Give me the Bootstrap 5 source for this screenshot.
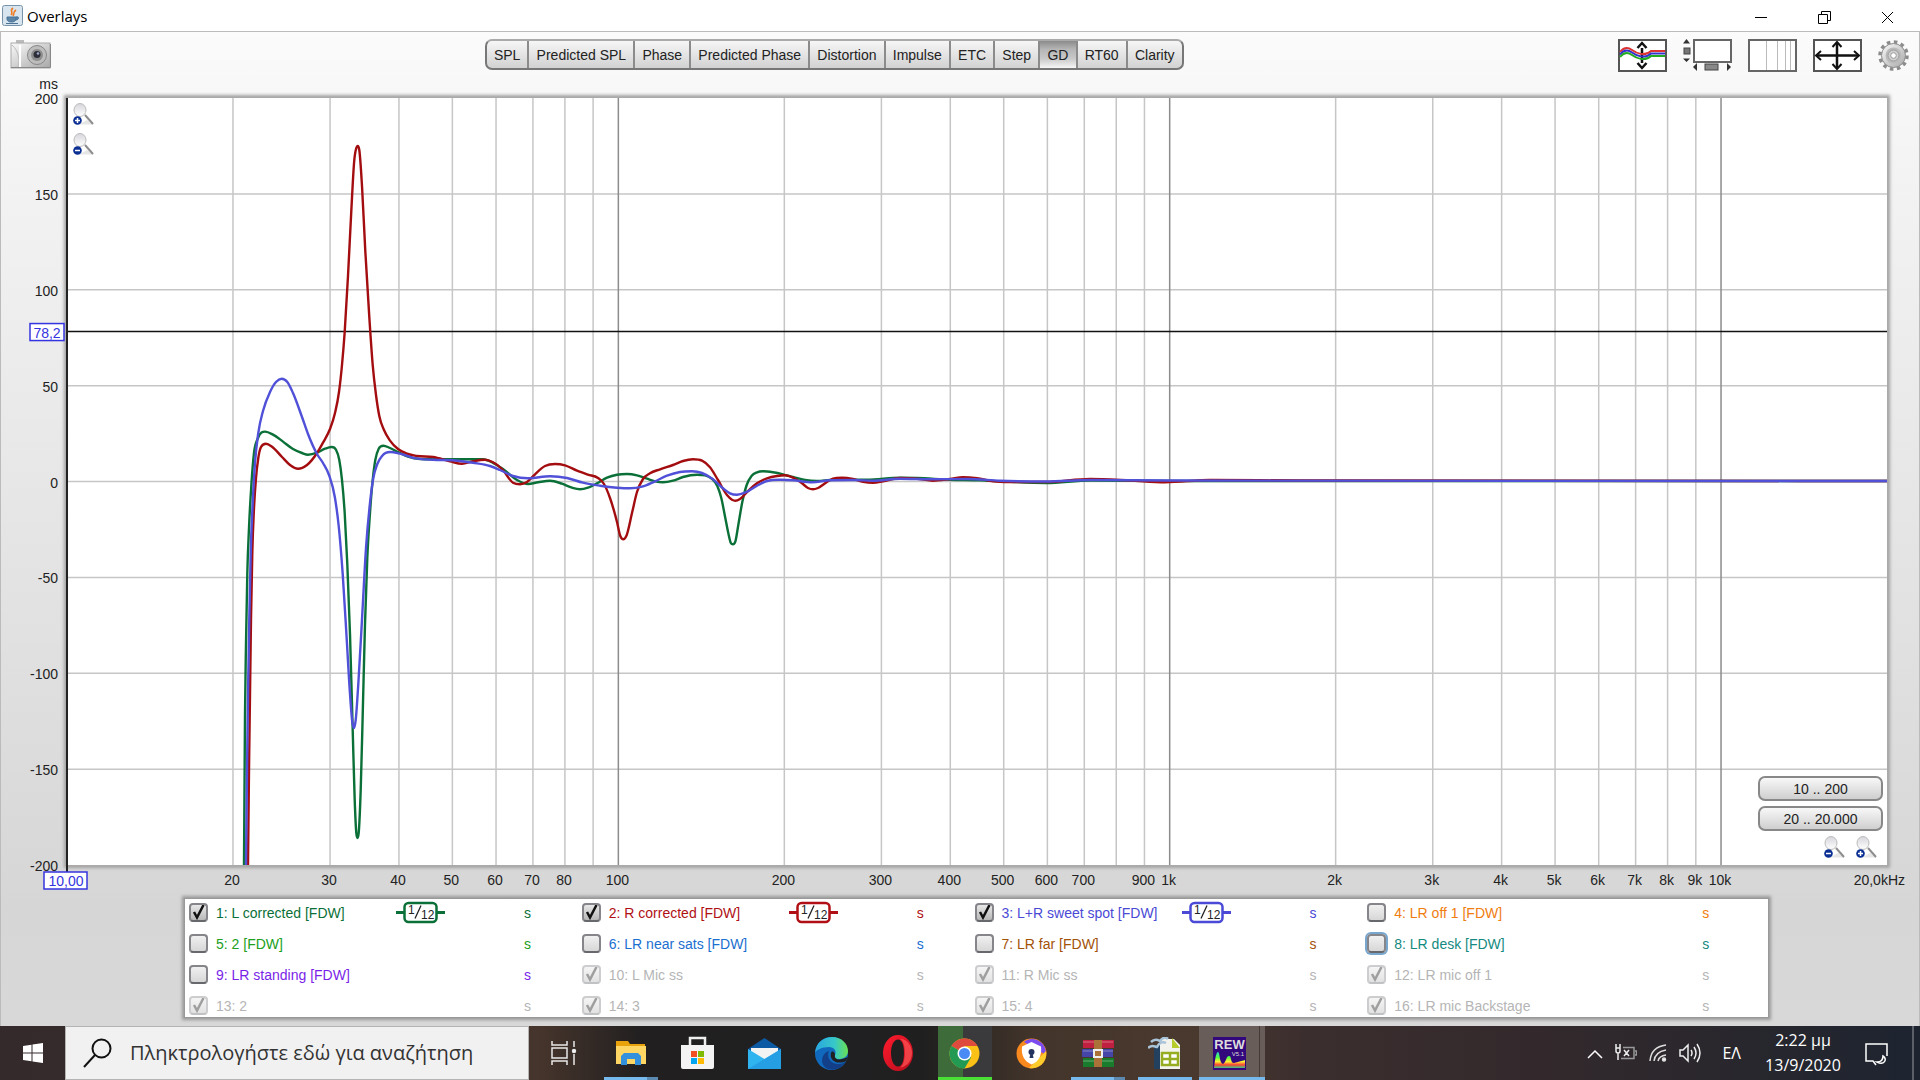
<!DOCTYPE html>
<html lang="el">
<head>
<meta charset="utf-8">
<meta name="viewport" content="width=device-width, initial-scale=1">
<title>Overlays</title>
<link href="https://cdn.jsdelivr.net/npm/bootstrap@5.3.0/dist/css/bootstrap.min.css" rel="stylesheet">
<style>
body{font:14px/16px "Liberation Sans",Arial,sans-serif;color:#222;background:#fff}
.ui-font{font-family:"Open Sans","Noto Sans",sans-serif}
.titlebar{height:31px;background:#fff;color:#000;font-size:15px;padding:0 1px 0 2px}
.winbtn{width:63px;height:31px;border:0;background:none;padding:0;color:#000}
.workspace{border:1px solid #bbb;border-bottom:0;background:linear-gradient(#fbfbfb,#f4f4f4 12%,#d6d6d6 88%,#d8d8d8)}
.tools{height:66px;padding:7px 10px 0 9px}
.iconbtn{border:0;background:none;padding:0;display:block;line-height:0}
.tabs{width:699px;height:31px;border:2px solid #777;border-top-color:#aaa;border-radius:7px;overflow:hidden;background:linear-gradient(#f6f6f6,#d2d2d2)}
.tabs button{flex:1 1 auto;border:0;border-right:2px solid #8b8b8b;background:none;padding:0 6px;color:#222;white-space:nowrap}
.tabs button:last-child{border-right:0}
.tabs button.chosen{background:linear-gradient(#8b8b8b,#b5b5b5 30%,#c8c8c8 65%,#f6f6f6)}
.chartrow{padding:0 32px 0 66px}
.plot{background:#fff;box-shadow:0 0 0 1px #aaa,0 0 3px 3px #a2a2a2;min-height:300px}
.plot svg.canvas{flex:1 1 0;overflow:visible;min-width:0}
.canvas text{font-size:14px;fill:#222}
.canvas .cursorlabel{fill:#3434e0}
.grid line{stroke:#c6c6c6;stroke-width:1.5}
.grid line.decade{stroke:#8c8c8c}
.curves path{fill:none;stroke-width:2.4;stroke-linejoin:round;vector-effect:non-scaling-stroke}
.zoomy{position:absolute;left:6px;top:5px;display:flex;flex-direction:column;gap:8px}
.ranges{position:absolute;right:4px;bottom:7px;width:125px}
.ranges .rangebtn{height:25px;margin-bottom:5px;border:2px solid #888;border-radius:7px;background:linear-gradient(#f8f8f8,#cfcfcf);color:#222;padding:0;display:block;width:100%}
.ranges .zooms{padding-right:6px;gap:11px}
.legendbox{margin:34px 151px 9px 184px;height:118px;background:#fff;box-shadow:0 0 0 1px #999,0 0 3px 3px #9a9a9a;padding:1px 8px 0 4px}
.tracegrid{row-gap:6px}
.trace{height:25px;display:grid;grid-template-columns:207px 128px 1fr;align-items:center}
.trace label{display:flex;align-items:center;gap:8px;white-space:nowrap}
.tick{appearance:none;width:19px;height:19px;margin:0;border:2px solid #85858a;border-bottom-color:#66686c;border-radius:4px;background:linear-gradient(#f0f0f0,#d7d7d7) center/100% 100%}
.tick:checked{background:url("data:image/svg+xml,%3Csvg xmlns='http://www.w3.org/2000/svg' viewBox='0 0 15 15'%3E%3Cpath d='M3 7 6 12.500 12.500 0' fill='none' stroke='%23111' stroke-width='2.500'/%3E%3C/svg%3E") center/100% 100%,linear-gradient(#e8e8e8,#b8b8b8)}
.tick:disabled{opacity:.4}
.tick.focused{box-shadow:0 0 0 2px #77a6cf}
.muted{color:#b5b5b5}
.taskbar{height:54px;color:#fff;background:linear-gradient(90deg,#352a2b 0,#392d2c 20%,#46352c 28%,#211f20 33.500%,#202022 45%,#1f1f1f 48%,#43352b 54%,#4a392e 62%,#3b2e2e 68%,#33292c 80%,#29272d 90%,#1d2430)}
.taskbar button{border:0;background:none;padding:0;color:#fff}
.start{width:65px}
.searchbox{width:464px;background:#f1f1f1;border:1px solid #b4b4b4;padding-left:17px;gap:18px}
.searchbox input{border:0;background:none;outline:0;font-size:20px;line-height:28px;flex:1;min-width:0;color:#333;padding:0}
.searchbox input::placeholder{color:#333;opacity:1}
.apps{width:734px;margin-left:2px}
.apps .slot{flex:1 1 0;display:flex;justify-content:center;align-items:stretch}
.apps .slot button{width:54px;display:flex;align-items:center;justify-content:center}
.apps .running{box-shadow:inset 0 -3px #76b9ed}
.apps .split{background:linear-gradient(#5b89b0,#5b89b0) right bottom/11px 3px no-repeat,linear-gradient(#76b9ed,#76b9ed) bottom/100% 3px no-repeat}
.apps .busy{box-shadow:inset 0 -3px #4be036;background:linear-gradient(90deg,#3d6b39 25px,#3a3a3c 25px)}
.apps .slot .current{width:66px;padding-right:4px;background:linear-gradient(90deg,transparent 60px,#463a36 60px,#463a36 61px,transparent 61px),#685d59;box-shadow:inset 0 -3px #76b9ed}
.tray{padding-right:2px;font-size:16px;line-height:25px}
.status{gap:12px}
.lang{padding:0 16px 0 20px}
.clock{width:92px;text-align:center}
.desk{width:6px;height:54px;border-left:2px solid #5b5f68 !important}
</style>
</head>
<body class="d-flex flex-column min-vh-100">

<svg width="0" height="0" class="position-absolute" aria-hidden="true">
  <defs>
    <linearGradient id="lens" x1="0" y1="0" x2="0" y2="1"><stop offset="0" stop-color="#d6d6dc"/><stop offset="1" stop-color="#fff"/></linearGradient>
    <linearGradient id="metal" x1="0" y1="0" x2="1" y2="1"><stop offset="0" stop-color="#fafafa"/><stop offset="1" stop-color="#a8a8a8"/></linearGradient>
    <linearGradient id="edge1" x1="0" y1="0" x2="1" y2="0"><stop offset="0" stop-color="#2aa6e0"/><stop offset=".6" stop-color="#37c8c8"/><stop offset="1" stop-color="#69e052"/></linearGradient>
    <linearGradient id="opera" x1="0" y1="0" x2="1" y2="1"><stop offset="0" stop-color="#ff1b2d"/><stop offset="1" stop-color="#b70d1c"/></linearGradient>
    <linearGradient id="rainbow" x1="0" y1="0" x2="0" y2="1"><stop offset="0" stop-color="#2ad0c8"/><stop offset=".35" stop-color="#5f4"/><stop offset=".6" stop-color="#fe3"/><stop offset=".8" stop-color="#f43"/><stop offset="1" stop-color="#3c8"/></linearGradient>
    <symbol id="glass" viewBox="0 0 21 22">
      <path d="M6 21.500h14.500L14 17z" fill="#e6e6e6"/><path d="M12 12 20 21" stroke="#8d8d8d" stroke-width="2"/>
      <ellipse cx="7" cy="7" rx="6" ry="6.500" fill="url(#lens)" stroke="#bbb"/>
      <circle cx="4.500" cy="17.500" r="4.300" fill="#0b2f93"/>
    </symbol>
    <symbol id="filter" viewBox="0 0 49 23">
      <path d="M0 11.500h9m31 0h9" stroke="currentColor" stroke-width="3"/>
      <rect x="8.500" y="2" width="32" height="19" rx="4" fill="#fff" stroke="currentColor" stroke-width="2.500"/>
      <path d="M19 17.500 25 4.500" stroke="#222" stroke-width="1.300"/>
    </symbol>
  </defs>
</svg>

<header class="titlebar ui-font d-flex align-items-center">
  <svg width="21" height="21" viewBox="0 0 21 21" aria-hidden="true"><rect x=".5" y=".5" width="20" height="20" rx="2" fill="#d8e4ee" stroke="#7894ab"/><path d="M11 3c-4 3 1 4-2 7m5-5c-4 3-1 3-3 6" fill="none" stroke="#ee7b21" stroke-width="1.600"/><path d="M5 12h9v2c0 2-2 3-4.500 3S5 16 5 14zm9 0c4-1 3 3-.5 3M4 18.500h12" fill="#5b84a6" stroke="#4b7396"/></svg>
  <span class="ms-1">Overlays</span>
  <div class="ms-auto d-flex">
    <button class="winbtn" aria-label="Minimize"><svg width="13" height="13"><path d="M0 6.500h12" stroke="#000"/></svg></button>
    <button class="winbtn" aria-label="Restore"><svg width="13" height="13" fill="none" stroke="#000"><path d="M.5 3.500h9v9h-9zM3.500 3V.5h9v9H10"/></svg></button>
    <button class="winbtn" aria-label="Close"><svg width="13" height="13" stroke="#000"><path d="m1 1 11 11M12 1 1 12"/></svg></button>
  </div>
</header>

<main class="workspace flex-grow-1 d-flex flex-column">
  <div class="tools d-flex align-items-start">
    <div class="w-25">
      <button class="iconbtn" aria-label="Capture image"><svg width="42" height="30" viewBox="0 0 42 30"><rect x="6" y="1" width="8" height="4" fill="#bbb"/><rect x="1" y="4" width="39" height="25" fill="url(#metal)" stroke="#aaa"/><path d="M1 28.500h39.500V5" fill="none" stroke="#888"/><path d="M2 6c7 6 8 16 6 22" fill="none" stroke="#bbb"/><path d="M10 6v22" stroke="#fff" stroke-width="2"/><circle cx="27" cy="16" r="9.500" fill="#bdbdbd" stroke="#888"/><circle cx="27" cy="16" r="6" fill="#8d8d8d"/><circle cx="27" cy="15.500" r="3.500" fill="#2d2d38"/><circle cx="28" cy="14.500" r="1.300" fill="#a0a8c8"/></svg></button>
    </div>
    <nav class="tabs d-flex" aria-label="Graph type">
      <button>SPL</button><button>Predicted SPL</button><button>Phase</button><button>Predicted Phase</button><button>Distortion</button><button>Impulse</button><button>ETC</button><button>Step</button><button class="chosen" aria-pressed="true">GD</button><button>RT60</button><button>Clarity</button>
    </nav>
    <div class="ms-auto d-flex gap-3">
      <button class="iconbtn" aria-label="Separate traces"><svg width="49" height="33" viewBox="0 0 49 33"><rect x="1" y="1" width="47" height="31" fill="#fff" stroke="#555" stroke-width="2"/><path d="M24 9v15M19.500 9 24 4l4.500 5m-9 15 4.500 5 4.500-5" fill="none" stroke="#111" stroke-width="2.500"/><g fill="none" stroke-width="2"><path d="M2 13c4-5 8-5 12-2s13 7 19 1h14" stroke="#d33"/><path d="M2 15.500c4-5 8-5 12-2s13 7 19 1h14" stroke="#33c"/><path d="M2 18c4-5 8-5 12-2s13 7 19 1h14" stroke="#2a2"/></g></svg></button>
      <button class="iconbtn" aria-label="Scrollbars"><svg width="49" height="33" viewBox="0 0 49 33"><rect x="11" y="1" width="37" height="22" fill="#fff" stroke="#666" stroke-width="2"/><path d="M0 4.500 3.500 0 7 4.500zM0 19.500h7L3.500 23zM14 24v8l-4-4zM44 24v8l4-4z" fill="#333"/><rect x="1" y="9" width="6" height="6" fill="#777" stroke="#444"/><rect x="22" y="25" width="13" height="6" fill="#888" stroke="#444"/></svg></button>
      <button class="iconbtn" aria-label="Frequency axis"><svg width="49" height="33" viewBox="0 0 49 33"><rect x="1" y="1" width="47" height="31" fill="#fff" stroke="#666" stroke-width="2"/><path d="M18.500 2v29m11-29v29m8-29v29m5-29v29" stroke="#bbb"/></svg></button>
      <button class="iconbtn" aria-label="Graph limits"><svg width="49" height="33" viewBox="0 0 49 33"><rect x="1" y="1" width="47" height="31" fill="#fff" stroke="#555" stroke-width="2"/><path d="M4 16.500h41M24 4v25" stroke="#111" stroke-width="2.500"/><path d="m8 12-5 4.500L8 21m33-9 5 4.500-5 4.500M19.500 8 24 3l4.500 5m-9 17 4.500 5 4.500-5" fill="none" stroke="#111" stroke-width="2"/></svg></button>
      <button class="iconbtn" aria-label="Graph controls"><svg width="31" height="33" viewBox="-15.500 -16.500 31 33"><circle r="13.500" fill="none" stroke="#8c8c8c" stroke-width="3.500" stroke-dasharray="3.530 3.530"/><circle r="12" fill="url(#metal)" stroke="#8c8c8c"/><circle r="8" fill="#bbb"/><circle r="5.500" fill="#d0d0d0" stroke="#9b9b9b"/><circle r="2.800" fill="#fff" stroke="#999"/></svg></button>
    </div>
  </div>

  <div class="chartrow flex-grow-1 d-flex">
    <div class="plot flex-grow-1 d-flex position-relative">
      <svg class="canvas" role="img" aria-label="Group delay graph">
        <g class="grid" id="grid"></g>
        <line x1="0" x2="100%" y1="30.450%" y2="30.450%" stroke="#111" stroke-width="1.500"/>
        <svg class="curves" id="curves" x="0" y="0" width="100%" height="100%" viewBox="67 98 1820 767" preserveAspectRatio="none"></svg>
        <path d="M0 0v774" stroke="#222" stroke-width="2"/>
        <g id="ticks"></g>
        <text x="-9" y="-9" text-anchor="end">ms</text>
        <svg x="0" y="30.450%" overflow="visible"><rect x="-37" y="-8" width="34" height="17" fill="#fff" stroke="#3434e0" stroke-width="1.500"/><text class="cursorlabel" x="-20" y="6" text-anchor="middle">78,2</text></svg>
        <svg x="0" y="100%" overflow="visible"><rect x="-23" y="7" width="43" height="17" fill="#fff" stroke="#3434e0" stroke-width="1.500"/><text class="cursorlabel" x="-1" y="21" text-anchor="middle">10,00</text></svg>
      </svg>
      <div class="zoomy">
        <button class="iconbtn" aria-label="Zoom in vertically"><svg width="21" height="22" viewBox="0 0 21 22"><use href="#glass"/><path d="M2 17.500h5m-2.500-2.500v5" stroke="#fff" stroke-width="1.500"/></svg></button>
        <button class="iconbtn" aria-label="Zoom out vertically"><svg width="21" height="22" viewBox="0 0 21 22"><use href="#glass"/><path d="M2 17.500h5" stroke="#fff" stroke-width="1.500"/></svg></button>
      </div>
      <div class="ranges">
        <button class="rangebtn">10 .. 200</button>
        <button class="rangebtn">20 .. 20.000</button>
        <div class="zooms d-flex justify-content-end">
          <button class="iconbtn" aria-label="Zoom out"><svg width="21" height="22" viewBox="0 0 21 22"><use href="#glass"/><path d="M2 17.500h5" stroke="#fff" stroke-width="1.500"/></svg></button>
          <button class="iconbtn" aria-label="Zoom in"><svg width="21" height="22" viewBox="0 0 21 22"><use href="#glass"/><path d="M2 17.500h5m-2.500-2.500v5" stroke="#fff" stroke-width="1.500"/></svg></button>
        </div>
      </div>
    </div>
  </div>

  <section class="legendbox" aria-label="Traces"><div class="row g-0 tracegrid" id="traces"></div></section>
</main>

<footer class="taskbar ui-font d-flex align-items-stretch">
  <button class="start" aria-label="Start"><svg width="20" height="20" viewBox="0 0 20 20" fill="#fff"><path d="M0 3l8.500-1.300v7.800H0zM9.500 1.500 20 0v9.500H9.500zM0 10.500h8.500v7.800L0 17zM9.500 10.500H20V20L9.500 18.500z"/></svg></button>
  <label class="searchbox d-flex align-items-center"><svg width="29" height="30" viewBox="0 0 29 30" fill="none" stroke="#111" stroke-width="2"><circle cx="18.500" cy="10.500" r="9"/><path d="M12 17 1 29"/></svg><input type="search" aria-label="Αναζήτηση" placeholder="Πληκτρολογήστε εδώ για αναζήτηση"></label>
  <div class="apps d-flex">
    <div class="slot"><button aria-label="Task view"><svg width="26" height="24" viewBox="0 0 26 24" fill="none" stroke="#e8e8e8" stroke-width="1.500"><path d="M1 0v4h15V0M1 24v-4h15v4M1 7h15v10H1zM23 0v6m0 7v11"/><circle cx="23" cy="10" r="1.500" fill="#fff"/></svg></button></div>
    <div class="slot"><button class="split" aria-label="File Explorer"><svg width="30" height="24" viewBox="0 0 30 24"><path d="M0 0h12l2 3h15v20H0z" fill="#e8a30c"/><path d="M0 5h30v18H0z" fill="#fdd663"/><path d="M5 24v-9l3-3h14l3 3v9h-6v-6h-8v6z" fill="#3390dc"/></svg></button></div>
    <div class="slot"><button aria-label="Store"><svg width="33" height="34" viewBox="0 0 33 34"><path d="M9 10V2h15v8" fill="none" stroke="#eee" stroke-width="2.500"/><path d="M0 9h33v22q0 2-2 2H2q-2 0-2-2z" fill="#f3f3f3"/><path d="M10 15h6v6h-6z" fill="#f25022"/><path d="M17 15h6v6h-6z" fill="#7fba00"/><path d="M10 22h6v6h-6z" fill="#00a4ef"/><path d="M17 22h6v6h-6z" fill="#ffb900"/></svg></button></div>
    <div class="slot"><button aria-label="Mail"><svg width="33" height="31" viewBox="0 0 33 31"><path d="M0 11 16.500 0 33 11v20H0z" fill="#0c59a4"/><path d="M3 10h27v14H3z" fill="#f3f3f3"/><path d="m0 11 16.500 10L33 11v20H0z" fill="#2fb4f0"/><path d="m33 11-16.500 10L0 31h33z" fill="#1f8fdc" opacity=".6"/></svg></button></div>
    <div class="slot"><button aria-label="Edge"><svg width="33" height="33" viewBox="0 0 33 33"><circle cx="16.500" cy="16.500" r="16.500" fill="#1069bd"/><path d="M0 16C1 5 9 0 17 0c10 0 16 7 16 14 0 6-5 8-9 8-4 0-5-2-4-4 2-4-1-8-6-8C7 10 1 13 0 16z" fill="url(#edge1)"/><path d="M14 14c-3 6 2 14 10 13 3 0 5-1 7-3-6 12-23 11-24 0 0-5 3-9 7-10z" fill="#123f87"/><path d="M20 18c-1 5 5 6 13 2l-2 4c-8 4-17 0-15-8 1-3 4-1 4 2z" fill="#202022"/></svg></button></div>
    <div class="slot"><button aria-label="Opera"><svg width="30" height="36" viewBox="0 0 30 32" preserveAspectRatio="none"><path fill-rule="evenodd" d="M15 0a15 16 0 1 0 0 32 15 16 0 0 0 0-32zm0 4c4 0 6 5 6 12s-2 12-6 12-7-5-7-12 3-12 7-12z" fill="url(#opera)"/><path d="M17 3c16 2 16 24 0 26 6-3 7-22 0-26z" fill="#ff5557" opacity=".7"/></svg></button></div>
    <div class="slot"><button class="busy" aria-label="Chrome"><svg width="31" height="31" viewBox="-15.500 -15.500 31 31"><circle r="15" fill="#fbc116"/><path d="M0 0-13-7.500A15 15 0 0 1 13-7.500H0z" fill="#de4a3d"/><path d="m0 0-13-7.500A15 15 0 0 0 0 15L6.500 4z" fill="#229a54"/><circle r="7" fill="#fff"/><circle r="5.500" fill="#4a8af4"/></svg></button></div>
    <div class="slot"><button aria-label="Secure browser"><svg width="31" height="31" viewBox="0 0 31 31"><circle cx="15.500" cy="15.500" r="15" fill="#fb8a1e"/><path d="M8 4C15-3 31 2 30 17z" fill="#7c4dee"/><path d="M30 13c2 12-9 19-17 17z" fill="#fbcc2c"/><path d="M15.500 4 25 8.500c1 9-2 15-9.500 18C8 23 5 17 6 8.500z" fill="#fff"/><circle cx="15.500" cy="14" r="3" fill="#24335e"/><path d="M14.500 15h2l1 5h-4z" fill="#24335e"/></svg></button></div>
    <div class="slot"><button class="split" aria-label="Archive manager"><svg width="32" height="27" viewBox="0 0 32 27"><path d="M1 0h31v8H1z" fill="#bf2040"/><path d="M0 9h31v8H0z" fill="#4545a8"/><path d="M1 18h31v9H1z" fill="#197c2c"/><path d="M1 2h30M1 11h30M1 21h30" stroke="#fff" opacity=".35"/><path d="M12 0h8v27h-8z" fill="#aa7138"/><rect x="12" y="10" width="8" height="7" fill="none" stroke="#eee" stroke-width="2"/></svg></button></div>
    <div class="slot"><button class="running" aria-label="Spreadsheet"><svg width="33" height="33" viewBox="0 0 33 33"><path d="M6 8h8v24H6z" fill="#23415e"/><path d="M12 2h14l6 6v24H12z" fill="#f3f3ee"/><path d="M24 1l8 10h-8z" fill="#b6cc2b"/><path d="M14 16h16v12H14zm0 6h16m-8-6v12" fill="#fff" stroke="#96ad22" stroke-width="2.500"/><path d="M0 11c4-4 7-1 9-1 3-6 7-5 9-4M3 5c4-4 7-2 9-1 3-4 6-4 8-2" fill="none" stroke="#a9c3d8" stroke-width="2.500"/></svg></button></div>
    <div class="slot"><button class="current" aria-label="REW"><svg width="33" height="33" viewBox="0 0 33 33"><path d="M0 0h33v33H0z" fill="#33087c"/><text x="16.500" y="12" font-family="Liberation Sans" font-weight="700" font-size="13" fill="#ddd" text-anchor="middle">REW</text><text x="31" y="19" font-family="Liberation Sans" font-size="6" fill="#ddd" text-anchor="end">V5.1</text><path d="M1 31c1-8 2-16 4-16s1 11 5 12c3-1 3-8 6-8s1 7 5 7l11-3v8z" fill="url(#rainbow)"/></svg></button></div>
  </div>
  <div class="tray d-flex align-items-center ms-auto">
    <div class="status d-flex align-items-center">
    <button aria-label="Show hidden icons"><svg width="16" height="10" viewBox="0 0 16 10" fill="none" stroke="#fff" stroke-width="1.500"><path d="m1 9 7-7 7 7"/></svg></button>
    <svg width="22" height="18" viewBox="0 0 22 18" fill="none" stroke="#eee" stroke-width="1.500" role="img" aria-label="Battery"><path d="M1 4v3q0 2 2 2t2-2V4zm0 0V0m4 4V0M3 9v7M9 6l5 6m0-6-5 6"/><path d="M8 3.500h11v11H6M20 7h1.500v4H20" stroke="#999"/></svg>
    <svg width="18" height="18" viewBox="0 0 18 18" fill="none" stroke="#ddd" stroke-width="1.500" role="img" aria-label="Network"><path d="M1 17Q2 3 17 1M5 17q1-9 12-11M9 17q1-5 8-6"/><circle cx="15" cy="15.500" r="1.500" fill="#fff"/></svg>
    <svg width="23" height="20" viewBox="0 0 23 20" fill="none" stroke="#eee" stroke-width="1.500" role="img" aria-label="Volume"><path d="M1 7h3l5-5v16l-5-5H1zM12 7q2 3 0 6M15 4q4 6 0 12M18 1q6 9 0 18"/></svg>
    </div>
    <span class="lang">ΕΛ</span>
    <div class="clock">2:22 μμ<br>13/9/2020</div>
    <button class="mx-3" aria-label="Notifications"><svg width="23" height="23" viewBox="0 0 23 23" fill="none" stroke="#fff" stroke-width="1.500"><path d="M11 22 8 18H1V1h21v12M12 19c5 0 6-3 6-6 5 3 1 10-6 6z"/></svg></button>
    <button class="desk ms-2" aria-label="Show desktop"></button>
  </div>
</footer>

<script src="https://cdn.jsdelivr.net/npm/bootstrap@5.3.0/dist/js/bootstrap.bundle.min.js"></script>
<script>
const pctX = f => (Math.log10(f / 10) / Math.log10(2000) * 100).toFixed(3) + '%';
const pctY = v => ((200 - v) / 4).toFixed(3) + '%';

let lines = '', ticks = '';
for (let v = 200; v >= -200; v -= 50) {
  if (Math.abs(v) < 200) lines += `<line x1="0" x2="100%" y1="${pctY(v)}" y2="${pctY(v)}"/>`;
  ticks += `<text x="-9" y="${pctY(v)}" dy="6" text-anchor="end">${v}</text>`;
}
for (const d of [10, 100, 1000, 10000])
  for (let m = 1; m < 10; m++) {
    const f = d * m;
    if (f > 10 && f < 20000) lines += `<line class="${m === 1 ? 'decade' : ''}" y1="0" y2="100%" x1="${pctX(f)}" x2="${pctX(f)}"/>`;
    if (f === 10 || f === 90 || f === 800 || f > 10000) continue;
    ticks += `<text x="${pctX(f)}" y="100%" dx="-1" dy="20" text-anchor="middle">${f < 1000 ? f : f / 1000 + 'k'}</text>`;
  }
ticks += '<text x="100%" dx="18" y="100%" dy="20" text-anchor="end">20,0kHz</text>';
document.getElementById('grid').innerHTML = lines;
document.getElementById('ticks').innerHTML = ticks;

const curves = [
 ['#0b7038', '244,865 245,715 246,644 247.3,574 249,528 251.5,483 254,453 258,438 265,431.6 273,434.6 283,441.6 293,449 302,453 308,454.7 317,452.7 325,448.7 331.7,447 336,449.7 339.3,460 342,480 344.7,513 347.3,564 350,634 352.7,730 354.7,800 356.3,833 357.5,838 358.7,833 360.7,790 362.7,715 365,624 367.3,558 370,513 372.7,480 375.3,460 378.7,448.7 383.3,445.7 390,448 398,452 408,456.7 420,459 447,459.3 483,459.3 493,462.8 503,469 517,480 528,484 538,482.3 550,480.7 562,483.7 572,487.7 580,489.3 588,487.7 597,483.3 607,477.7 617,474.7 627,474 637,475.3 647,478.7 655,481.3 663,482.3 673,480.7 683,477 697,474.7 705,475.3 711.7,478.7 717.3,486 721.3,498 725.3,518 728.7,535 730.7,542.7 733,544.3 735.3,541.7 738.3,525 742.3,502 746.7,485 751.7,475.7 757,472.3 763,471.3 773,472.3 783,474.3 793,477 805,480 817,481 833,479.7 867,479.7 900,477.7 917,478 950,479.7 980,480.3 1000,481.3 1046,483 1090,480.5 1169,481 1887,481'],
 ['#a30d10', '248,865 249,770 250,695 251,619 252.3,553 254,508 256,478 258.3,458 261,447 266,443.7 272,446.7 282,457 290,465 298,468.8 307,465 317,453 323,442.6 330,429 335,413 339,392 342,365 344.7,332 348,276 351.3,211 354.3,160 356.3,148 357.7,146 359.3,150 362,186 365.3,251 369.3,317 372.7,365 376,395 379.3,416 384,430 390,440.6 398,449 407,453.7 417,456 433,457 450,461.3 462,463.8 473,461.3 485,459.8 493,462.3 502,469 513,482.7 520,484.3 527,482 535,474.3 545,466 555,464 565,465.3 577,470.7 588,474.7 598,478 604,484 610,498 617,522 620.3,536 623.3,539.3 626.3,536 632,513 637,492 643,479 650,473.3 660,469.3 673,465 683,461 693,459.3 702,460.7 710,467.3 718,480 727,495 732,499.7 735.3,500.7 740,499 748,491 757,483.3 767,478.3 777,476 785,475.3 793,477.7 802,483.3 808,488 813,489.3 818,488 827,482 833,478.7 842,477.7 853,479 863,481.7 873,482.7 883,481.3 900,478 917,478.7 933,480.7 950,479 963,477.3 977,478.3 993,481.3 1010,482 1046,482 1090,479 1130,480.5 1165,482.3 1210,480 1300,480.5 1887,481'],
 ['#5050d8', '246,865 247,770 248,695 249.3,619 250.7,553 252.7,503 255,463 258.3,433 263,411 270,392 276,382 281.7,378.7 287.3,382 293,393 302,417 308,434 317,454 323,463 329,475 335,498 338.7,526 342.7,574 346.7,639 350,694 352.3,722 354,728 355.7,720 358.3,684 362.3,614 366,548 370,503 373.3,478 377.3,464 382.3,455.7 390,452 400,453.7 413,457.8 433,459.8 453,460.3 473,462.8 490,466 500,470 513,476 528,478.3 550,476.3 567,478 583,482.7 600,485.7 617,487.7 630,488.3 642,486.7 655,481.3 667,475.7 680,472 692,471.3 702,473 713,479.3 723,488.3 730,493.3 737,494.7 745,492.7 757,485.7 767,481 780,479.7 793,480.3 812,482.3 830,480.3 853,480 873,480.7 900,478.7 933,479.3 967,479 1000,480.7 1046,481.5 1090,480 1169,480.5 1887,481']
];

// Monotone cubic interpolation keeps peaks and notches free of overshoot
function smooth(text) {
  const p = text.split(' ').map(s => s.split(',').map(Number)), n = p.length;
  const w = p.slice(1).map((q, i) => q[0] - p[i][0]);
  const s = p.slice(1).map((q, i) => (q[1] - p[i][1]) / w[i]);
  const t = p.map((_, i) => {
    if (i === 0) return s[0];
    if (i === n - 1) return s[n - 2];
    const a = s[i - 1], b = s[i];
    if (a * b <= 0) return 0;
    const m = (a * w[i] + b * w[i - 1]) / (w[i] + w[i - 1]);
    return Math.sign(a) * Math.min(3 * Math.abs(a), 3 * Math.abs(b), Math.abs(m));
  });
  let d = `M${p[0]}`;
  for (let i = 1; i < n; i++) {
    const h = w[i - 1] / 3;
    d += `C${p[i-1][0] + h},${p[i-1][1] + h * t[i-1]} ${p[i][0] - h},${p[i][1] - h * t[i]} ${p[i]}`;
  }
  return d;
}
document.getElementById('curves').innerHTML = curves.map(([c, pts]) => `<path stroke="${c}" d="${smooth(pts)}"/>`).join('');

const traces = [
  ['1: L corrected [FDW]', '#0b7038', 'on'], ['2: R corrected [FDW]', '#b01015', 'on'], ['3: L+R sweet spot [FDW]', '#4a4ad6', 'on'], ['4: LR off 1 [FDW]', '#ef7d10', ''],
  ['5: 2 [FDW]', '#20a020', ''], ['6: LR near sats [FDW]', '#1a6fd0', ''], ['7: LR far [FDW]', '#a35208', ''], ['8: LR desk [FDW]', '#148a80', 'focused'],
  ['9: LR standing [FDW]', '#7a1fe8', ''], ['10: L Mic ss'], ['11: R Mic ss'], ['12: LR mic off 1'],
  ['13: 2'], ['14: 3'], ['15: 4'], ['16: LR mic Backstage']
];
document.getElementById('traces').innerHTML = traces.map(([name, color, state], i) => {
  const off = color === undefined;
  const icon = state === 'on' ? '<svg width="49" height="23" viewBox="0 0 49 23"><use href="#filter"/><text x="12" y="13" font-size="12" fill="#222">1</text><text x="25" y="18" font-size="12" fill="#222">12</text></svg>' : '';
  return `<div class="col-3"><div class="trace ${off ? 'muted' : ''}" ${off ? '' : `style="color:${color}"`}>
    <label for="t${i}"><input type="checkbox" id="t${i}" class="tick ${state === 'focused' ? 'focused' : ''}" ${off || state === 'on' ? 'checked' : ''} ${off ? 'disabled' : ''}>${name}</label>
    <span class="lh-1">${icon}</span><span>s</span></div></div>`;
}).join('');
</script>
</body>
</html>
